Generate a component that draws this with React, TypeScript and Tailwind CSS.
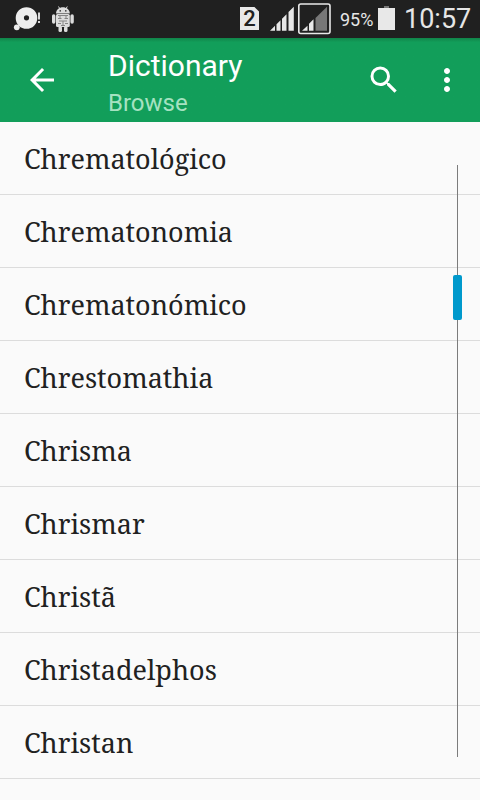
const entries = [
  "Chrematológico",
  "Chrematonomia",
  "Chrematonómico",
  "Chrestomathia",
  "Chrisma",
  "Chrismar",
  "Christã",
  "Christadelphos",
  "Christan",
];

function DiscIcon() {
  return (
    <svg width="28" height="24" viewBox="0 0 28 24" aria-hidden>
      <path
        fillRule="evenodd"
        fill="#ededed"
        d="M13.500.2a10.800 10.800 0 1 0 0 21.600a10.800 10.800 0 0 0 0-21.600Zm0 8a2.600 2.600 0 1 1 0 5.200a2.600 2.600 0 0 1 0-5.200Z"
      />
      <circle cx="3.800" cy="20.300" r="2.900" fill="#ededed" />
      <path d="M25 5.500h2v7h-2zM25 14h2v2h-2z" fill="#d8d8d8" />
    </svg>
  );
}

function RobotIcon() {
  return (
    <svg width="24" height="27" viewBox="0 0 24 27" aria-hidden>
      <g fill="#dcdcdc">
        <path d="M5 7.500C5.200-.8 18.600-.8 18.800 7.500Z" />
        <rect x="5" y="8" width="13.800" height="13" rx="1.500" />
        <rect x="1" y="8.300" width="3.400" height="9.500" rx="1.700" />
        <rect x="19.400" y="8.300" width="3.400" height="9.500" rx="1.700" />
        <rect x="7.500" y="20" width="3.500" height="6" rx="1.500" />
        <rect x="13" y="20" width="3.500" height="6" rx="1.500" />
      </g>
      <path d="m7.500.5 1.800 3M16.300.5l-1.800 3" stroke="#dcdcdc" strokeWidth="1" />
      <path d="M8.500 4.800H10M14 4.800h1.500" stroke="#222" strokeWidth="1.300" />
      <path
        d="M7 9.500h10M7 12.500h3.500M13.500 12.500H17M8 15h8M7 17.500h3M14 17.500h3M10 19.500h4M9 9.500v3M15 9.500v3M12 15v4.500"
        stroke="#858585"
        strokeWidth="1"
      />
    </svg>
  );
}

function StatusBar() {
  return (
    <div className="flex h-[38px] shrink-0 items-start bg-[#202020] font-['Roboto',sans-serif] text-[#e6e6e6]">
      <div className="ml-[13px] mt-[7px]">
        <DiscIcon />
      </div>
      <div className="ml-[10px] mt-[6px]">
        <RobotIcon />
      </div>
      <div className="ml-[165px] mt-[7px] flex h-[23px] w-[19px] items-center justify-center bg-[#e8e8e8] pt-px text-[22px] font-medium leading-none text-[#202020] [clip-path:polygon(0_0,76%_0,100%_20%,100%_100%,0_100%)]">
        2
      </div>
      <svg className="ml-[11px] mt-[3px]" width="61" height="32" viewBox="0 0 61 32" aria-hidden>
        <path
          d="M0 27.700L5 22.700v5ZM6.500 27.700v-6.500l4-4v10.500ZM12 27.700v-12l4.500-4.500v16.500ZM18.500 27.700V9L23.800 3.700v24Z"
          fill="#e8e8e8"
        />
        <rect x="28.800" y="1" width="31.200" height="29.500" rx="2" fill="none" stroke="#e8e8e8" strokeWidth="1.600" />
        <path d="M32 27.700l5.500-5v5ZM39 27.700v-7l4.500-4.500v11.500Z" fill="#e8e8e8" />
        <path d="M45.500 27.700V15L57 3.700v24Z" fill="#777" />
      </svg>
      <span className="ml-[9px] mt-[9px] w-[34px] whitespace-nowrap text-[18px] leading-[22px]">95%</span>
      <svg className="ml-[4px] mt-[6px]" width="17" height="24" viewBox="0 0 17 24" aria-hidden>
        <path d="M6 0h5v2H6z" fill="#777" />
        <path d="M0 2h17v22H0z" fill="#e8e8e8" />
      </svg>
      <span className="ml-[9px] mt-[3px] whitespace-nowrap text-[27px] leading-[32px]">10:57</span>
    </div>
  );
}

function Toolbar() {
  return (
    <header className="flex h-[84px] shrink-0 items-center bg-[#129e5a] bg-linear-to-b from-[#108449] from-0% to-[#129e5a] to-5% font-['Roboto',sans-serif]">
      <button type="button" aria-label="Back" className="ml-[24px]">
        <svg width="36" height="36" viewBox="0 0 24 24" fill="#fff">
          <path d="M20 11H7.830l5.590-5.590L12 4l-8 8 8 8 1.410-1.410L7.830 13H20v-2z" />
        </svg>
      </button>
      <div className="ml-[48px] flex flex-col whitespace-nowrap pt-[9px]">
        <h1 className="text-[30px] leading-[36px] text-white">Dictionary</h1>
        <p className="text-[24px] leading-[38px] text-[#a5e2c1]">Browse</p>
      </div>
      <button type="button" aria-label="Search" className="ml-auto">
        <svg width="36" height="36" viewBox="0 0 24 24" fill="#fff">
          <path d="M15.500 14h-.79l-.28-.27A6.471 6.471 0 0 0 16 9.500 6.500 6.500 0 1 0 9.500 16c1.610 0 3.090-.59 4.230-1.570l.27.28v.79l5 4.990L20.490 19l-4.990-5zm-6 0C7.010 14 5 11.990 5 9.500S7.010 5 9.500 5 14 7.010 14 9.500 11.990 14 9.500 14z" />
        </svg>
      </button>
      <button type="button" aria-label="More options" className="ml-[27px] mr-[15px]">
        <svg width="36" height="36" viewBox="0 0 24 24" fill="#fff">
          <path d="M12 8c1.100 0 2-.9 2-2s-.9-2-2-2-2 .9-2 2 .9 2 2 2zm0 2c-1.100 0-2 .9-2 2s.9 2 2 2 2-.9 2-2-.9-2-2-2zm0 6c-1.100 0-2 .9-2 2s.9 2 2 2 2-.9 2-2-.9-2-2-2z" />
        </svg>
      </button>
    </header>
  );
}

function FastScroller() {
  return (
    <div className="absolute right-[18px] top-[43px] flex h-[592px] w-[9px] justify-center">
      <div className="h-full w-px bg-[#7c7c7c]" />
      <div className="absolute top-[110px] h-[45px] w-[9px] rounded-[2px] bg-[#0099cc]" />
    </div>
  );
}

export default function App() {
  return (
    <div className="flex h-[800px] w-[480px] flex-col overflow-hidden bg-[#fafafa]">
      <StatusBar />
      <Toolbar />
      <main className="relative flex-1">
        <ul>
          {entries.map((entry) => (
            <li
              key={entry}
              className="flex h-[73px] items-center border-b border-[#dcdcdc] pl-[24px] pt-[2px] font-['Noto_Serif','Droid_Serif','DejaVu_Serif_Condensed',serif] text-[27px] text-[#212121]"
            >
              {entry}
            </li>
          ))}
        </ul>
        <FastScroller />
      </main>
    </div>
  );
}
